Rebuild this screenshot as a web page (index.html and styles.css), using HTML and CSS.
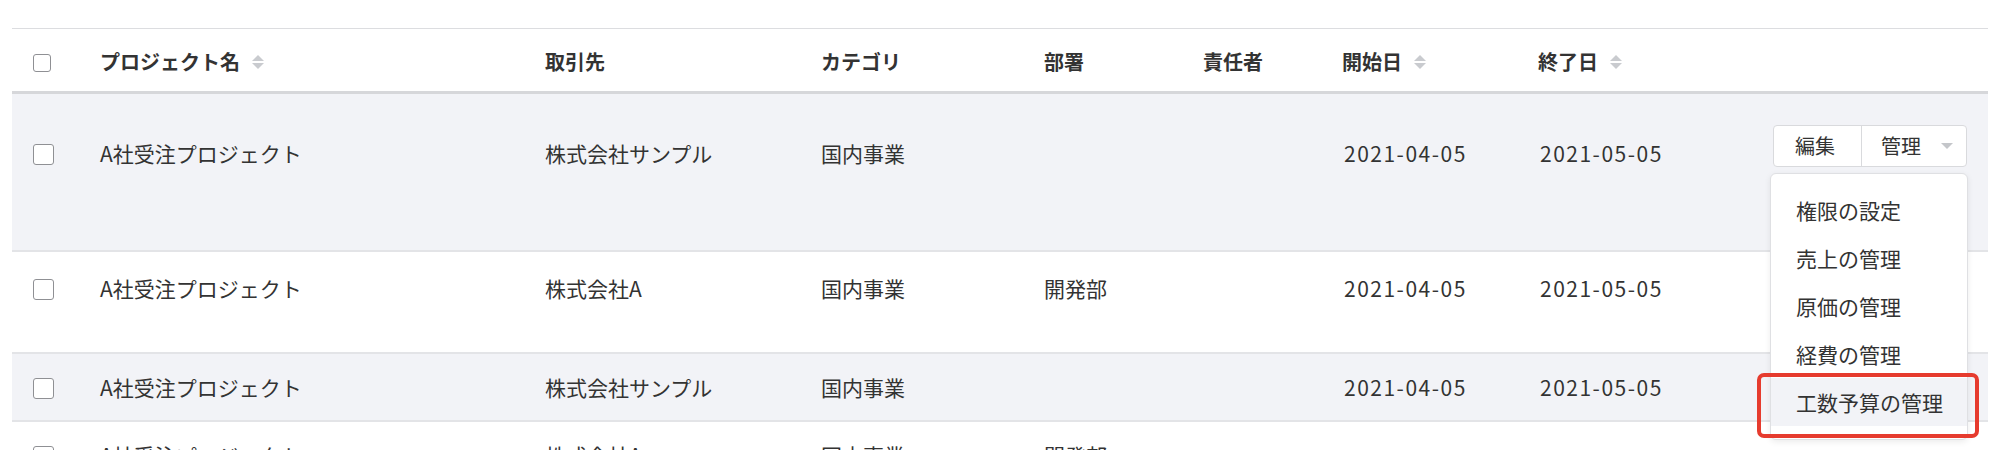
FILE: index.html
```html
<!DOCTYPE html>
<html lang="ja">
<head>
<meta charset="utf-8">
<link rel="stylesheet" href="styles.css">
</head>
<body>
<div class="viewport">
  <table class="list">
    <colgroup>
      <col class="c-check"><col class="c-name"><col class="c-client"><col class="c-cat"><col class="c-dept"><col class="c-owner"><col class="c-start"><col class="c-end"><col class="c-act">
    </colgroup>
    <thead>
      <tr>
        <th class="cell-check"><span class="checkbox checkbox--sm"></span></th>
        <th><span class="th-label">プロジェクト名<span class="sorter"></span></span></th>
        <th>取引先</th>
        <th>カテゴリ</th>
        <th>部署</th>
        <th>責任者</th>
        <th><span class="th-label">開始日<span class="sorter"></span></span></th>
        <th><span class="th-label">終了日<span class="sorter"></span></span></th>
        <th></th>
      </tr>
    </thead>
    <tbody>
      <tr class="row row--gray row--first">
        <td class="cell-check"><span class="checkbox"></span></td>
        <td>A社受注プロジェクト</td>
        <td>株式会社サンプル</td>
        <td>国内事業</td>
        <td></td>
        <td></td>
        <td class="date">2021-04-05</td>
        <td class="date">2021-05-05</td>
        <td class="cell-actions">
          <div class="actions">
            <div class="btn-group">
              <span class="btn btn-edit">編集</span>
              <span class="btn btn-manage">管理<span class="caret"></span></span>
            </div>
            <ul class="menu">
              <li>権限の設定</li>
              <li>売上の管理</li>
              <li>原価の管理</li>
              <li>経費の管理</li>
              <li class="is-hover">工数予算の管理</li>
            </ul>
            <div class="highlight"></div>
          </div>
        </td>
      </tr>
      <tr class="row row--second">
        <td class="cell-check"><span class="checkbox"></span></td>
        <td>A社受注プロジェクト</td>
        <td>株式会社A</td>
        <td>国内事業</td>
        <td>開発部</td>
        <td></td>
        <td class="date">2021-04-05</td>
        <td class="date">2021-05-05</td>
        <td></td>
      </tr>
      <tr class="row row--gray">
        <td class="cell-check"><span class="checkbox"></span></td>
        <td>A社受注プロジェクト</td>
        <td>株式会社サンプル</td>
        <td>国内事業</td>
        <td></td>
        <td></td>
        <td class="date">2021-04-05</td>
        <td class="date">2021-05-05</td>
        <td></td>
      </tr>
      <tr class="row">
        <td class="cell-check"><span class="checkbox"></span></td>
        <td>A社受注プロジェクト</td>
        <td>株式会社A</td>
        <td>国内事業</td>
        <td>開発部</td>
        <td></td>
        <td></td>
        <td></td>
        <td></td>
      </tr>
    </tbody>
  </table>
</div>
</body>
</html>
```

FILE: styles.css
```css
* { box-sizing: border-box; }
html, body { margin: 0; background: #fff; }
body {
  font-family: "Noto Sans CJK JP", "Noto Sans", sans-serif;
  color: #333;
}
.viewport {
  height: 450px;
  overflow: hidden;
  padding: 28px 14px 0 12px;
}
.list {
  width: 100%;
  border-collapse: collapse;
  table-layout: fixed;
  border-top: 1px solid #dcdde0;
}
.c-check { width: 88px; }
.c-name { width: 445px; }
.c-client { width: 276px; }
.c-cat { width: 223px; }
.c-dept { width: 159px; }
.c-owner { width: 139px; }
.c-start { width: 196px; }
.c-end { width: 235px; }
.c-act { width: auto; }

th {
  text-align: left;
  font-weight: 700;
  font-size: 20px;
  line-height: 30px;
  padding: 18px 0 14px 0;
  border-bottom: 3px solid #d6d7da;
  white-space: nowrap;
}
td {
  font-size: 21px;
  line-height: 30px;
  padding: 18px 0 18px 0;
  vertical-align: top;
  white-space: nowrap;
}
.cell-check { padding-left: 21px; }
.th-label { display: inline-flex; align-items: center; gap: 12px; }

.row td { border-bottom: 2px solid #e3e4e7; }
.row--gray td { background: #f2f3f7; }
.row--first td { padding-top: 44px; padding-bottom: 82px; }
.row--second td { padding-top: 21px; padding-bottom: 49px; }
.date { letter-spacing: 1.5px; padding-left: 2px; }

.checkbox {
  display: inline-block;
  width: 21px;
  height: 21px;
  border: 1.5px solid #8f9094;
  border-radius: 3px;
  background: #fff;
  vertical-align: middle;
  margin-top: -3px;
}
.checkbox--sm { width: 18px; height: 18px; }

.sorter {
  display: inline-flex;
  flex-direction: column;
  gap: 2px;
}
.sorter::before, .sorter::after {
  content: "";
  width: 0; height: 0;
  border-left: 6px solid transparent;
  border-right: 6px solid transparent;
}
.sorter::before { border-bottom: 6px solid #c9cbcf; }
.sorter::after { border-top: 6px solid #c9cbcf; }

.row--first .cell-actions { padding-top: 31px; }
.actions { position: relative; }
.btn-group {
  display: inline-flex;
  height: 42px;
  border: 1px solid #d9dadd;
  border-radius: 4px;
  background: #fff;
}
.btn {
  display: inline-flex;
  align-items: center;
  font-size: 20px;
  color: #333;
}
.btn-edit { width: 88px; padding-left: 21px; border-right: 1px solid #d9dadd; }
.btn-manage { width: 104px; padding-left: 19px; }
.caret {
  margin-left: 20px;
  width: 0; height: 0;
  border-left: 6px solid transparent;
  border-right: 6px solid transparent;
  border-top: 6px solid #c4c6ca;
}
.menu {
  position: absolute;
  left: -3px;
  top: 48px;
  width: 198px;
  margin: 0;
  padding: 12px 0 13px;
  list-style: none;
  background: #fff;
  border: 1px solid #dfe0e3;
  border-radius: 6px;
  box-shadow: 0 2px 6px rgba(0,0,0,0.08);
  z-index: 2;
}
.menu li {
  height: 48px;
  line-height: 48px;
  padding-left: 25px;
  font-size: 21px;
  color: #333;
}
.menu li.is-hover { background: #f2f3f7; }
.highlight {
  position: absolute;
  left: -16px;
  top: 248px;
  width: 222px;
  height: 65px;
  border: 4px solid #e63b2e;
  border-radius: 7px;
  z-index: 3;
}
```
